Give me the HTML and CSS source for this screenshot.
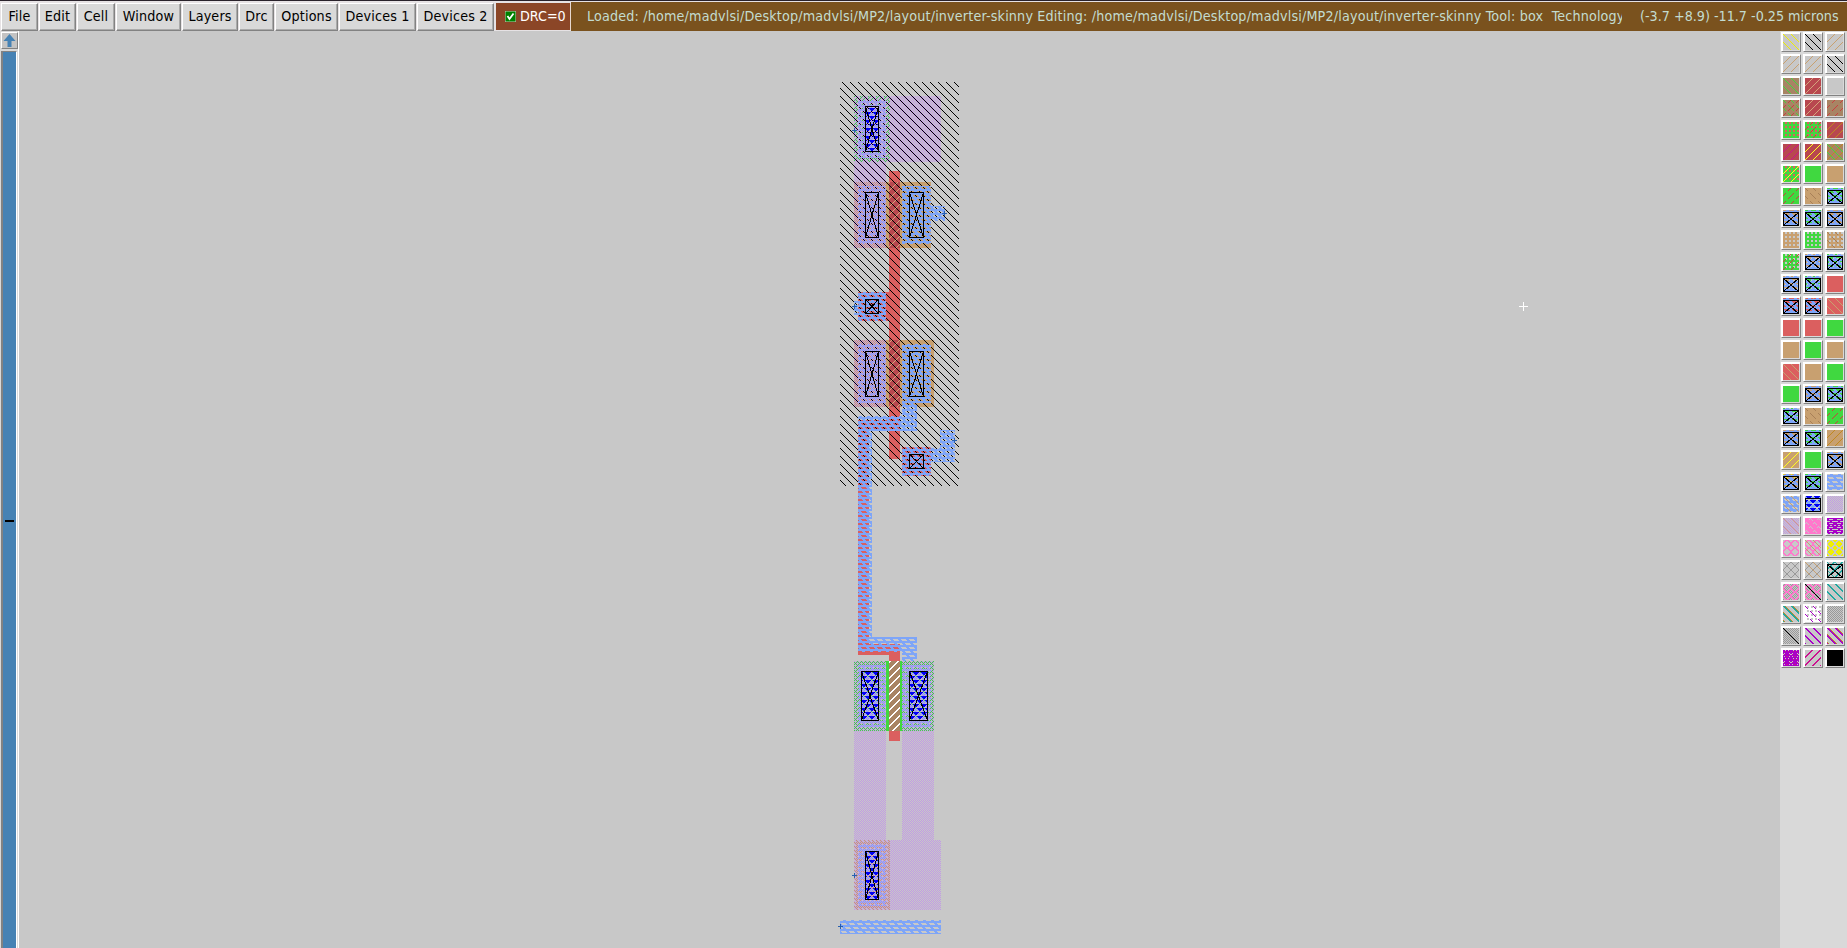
FILE: index.html
```html
<!DOCTYPE html>
<html lang="en">
<head>
<meta charset="utf-8">
<title>Magic layout</title>
<link rel="stylesheet" href="styles.css">
</head>
<body>
<header class="menubar">
  <nav class="menus">
    <button class="menu m-file">File</button>
    <button class="menu m-edit">Edit</button>
    <button class="menu m-cell">Cell</button>
    <button class="menu m-window">Window</button>
    <button class="menu m-layers">Layers</button>
    <button class="menu m-drc">Drc</button>
    <button class="menu m-options">Options</button>
    <button class="menu m-dev">Devices 1</button>
    <button class="menu m-dev">Devices 2</button>
  </nav>
  <div class="drc">
    <svg class="check" viewBox="0 0 11 11"><path class="check-bg" d="M0 0h11v11H0z"/><path class="check-tick" d="M2.5 5l2 3L8.500 2.500"/></svg>
    <span>DRC=0</span>
  </div>
  <div class="status">
    <div class="title">Loaded: /home/madvlsi/Desktop/madvlsi/MP2/layout/inverter-skinny Editing: /home/madvlsi/Desktop/madvlsi/MP2/layout/inverter-skinny Tool: box&nbsp; Technology</div>
    <div class="coords">(-3.7 +8.9) -11.7 -0.25 microns</div>
  </div>
</header>
<main class="work">
  <aside class="scroll">
    <div class="up"><svg viewBox="0 0 12 13"><path d="M6 0l6 7H8v6H4V7H0z"/></svg></div>
    <div class="track"><div class="tick"></div></div>
  </aside>
  <svg class="layout" id="layout" viewBox="19 31 1761 917" shape-rendering="crispEdges"></svg>
  <aside class="palette" id="palette"></aside>
</main>
<script src="app.js"></script>
</body>
</html>
```

FILE: styles.css
```css
* { box-sizing: border-box; }
body {
  margin: 0;
  width: 1847px;
  height: 948px;
  overflow: hidden;
  display: flex;
  flex-direction: column;
  background: #c8c8c8;
  font-family: "DejaVu Sans Condensed", "DejaVu Sans", sans-serif;
  font-stretch: condensed;
  font-size: 14px;
  color: #000;
}
.menubar {
  display: flex;
  height: 31px;
  flex: none;
  border-top: 1px solid #29222b;
  background: #e6e2e4;
  padding-top: 1px;
}
.menus { display: flex; gap: 1px; padding: 1px 0 0 1px; width: 496px; flex: none; }
.menu {
  height: 28px;
  padding: 0 0 2px;
  font: inherit;
  font-size: 14.2px;
  letter-spacing: 0.17px;
  color: #000;
  background: #d9d9d9;
  border: 1px solid;
  border-color: #fff #828282 #828282 #fff;
  box-shadow: inset -1px -1px #aaa;
  white-space: nowrap;
  flex: none;
}
.m-file { width: 37px; }
.m-edit { width: 37px; }
.m-cell { width: 38px; }
.m-window { width: 65px; }
.m-layers { width: 56px; }
.m-drc { width: 35px; }
.m-options { width: 63px; }
.m-dev { width: 77px; }
.drc {
  width: 75px;
  flex: none;
  margin-top: 1px;
  height: 27px;
  display: flex;
  align-items: center;
  gap: 4px;
  padding: 0 0 1px 9px;
  color: #fff;
  background: #8b4627;
  border-right: 1px solid #e6d8d0;
  font-size: 14.2px;
}
.check { width: 11px; height: 11px; flex: none; }
.check-bg { fill: #008000; stroke: #c8c8b8; stroke-width: 1; }
.check-tick { fill: none; stroke: #fff; stroke-width: 1.8; }
.status {
  flex: 1;
  display: flex;
  align-items: center;
  background: #7a521e;
  color: #c3dcd0;
  padding-left: 16px;
  white-space: pre;
  padding-bottom: 1px;
}
.title { width: 1035px; overflow: hidden; font-size: 14.2px; letter-spacing: 0.17px; line-height: 22px; flex: none; }
.coords { margin-left: 18px; font-size: 14.2px; flex: none; }
.work { display: flex; flex: 1; min-height: 0; }
.scroll { width: 19px; flex: none; background: #d9d9d9; padding: 1px 1px 0; display: flex; flex-direction: column; border-right: 1px solid #fff; }
.up { height: 17px; width: 17px; border: 1px solid; border-color: #fff #828282 #828282 #fff; background: #c3c3c3; padding: 1px; flex: none; }
.up svg { width: 13px; height: 13px; display: block; fill: #4682b4; }
.track { margin-top: 2px; flex: 1; width: 16px; background: #4682b4; border-left: 2px solid #828282; border-top: 1px solid #828282; border-right: 1px solid #fff; }
.tick { margin: 468px 0 0 2px; width: 9px; height: 2px; background: #000; }
.layout { width: 1761px; height: 917px; flex: none; display: block; background: #c8c8c8; }
.palette {
  flex: 1;
  background: #d9d9d9;
  display: grid;
  grid-template-columns: repeat(3, 20px);
  grid-auto-rows: 20px;
  gap: 2px;
  align-content: start;
  padding: 1px 0 0 1px;
}
.swatch {
  display: block;
  width: 20px;
  height: 20px;
  border: 1px solid;
  border-color: #fff #828282 #828282 #fff;
  box-shadow: inset 1px 1px #fff;
  padding: 1px;
  background: #d9d9d9;
}
.swatch svg { display: block; width: 16px; height: 16px; background: #c8c8c8; }
```

FILE: app.js
```js
// 8x8 stipple masks, one byte per row, most significant bit on the left.
const STIPPLES = {
  bs: '8040201008040201',
  bs3: '2010080402018040',
  fs: '0102040810204080',
  bs2: 'C06030180C060381',
  fs2: '03060C183060C081',
  bd: '8040200000040201',
  fd: '0102040000204080',
  chk: '55AA55AA55AA55AA',
  zig: '8A44A8118A44A811',
  zag: 'AA44AA11AA44AA11',
  metal: '1CFFFF83C1FFFF38',
  sq: '3333000033330000',
  via: '7E3C1800E7C38100',
  circ: '3C66C38181C3663C',
  thin: '8142241818244281',
  spot: 'FBF5FEFFBF5FEFFF',
  bar: 'FFC3FF18FFC3FF66',
  dots: '0024000042001800',
  pits: '2400004281004200'
};
const COLORS = {
  t: '#c8a070', g: '#40d840', r: '#db5f5f', d: '#b8484f', b: '#a88464', k: '#000',
  y: '#f0f000', Y: '#ffff20', w: '#fff', m: '#7ea5f8', l: '#c29be4', B: '#0000f4',
  o: '#c08820', n: '#d5a47c', x: '#c8c8c8', G: '#999', P: '#a800c8', K: '#ff78cc',
  T: '#20a8a0', M: '#cc1090', R: '#c84040', N: '#a88058'
};

function stipplePath(name, width, height) {
  const hex = STIPPLES[name];
  let d = '';
  for (let y = 0; y < height; y++) {
    const row = parseInt(hex.substr((y % 8) * 2, 2), 16);
    for (let x = 0; x < width; x++) {
      if (row & (128 >> (x % 8))) d += `M${x} ${y}h1v1h-1z`;
    }
  }
  return d;
}

// Layer palette: cells separated by spaces, layers inside a cell by commas.
const CELLS = `
bs:y bs:k fs:t
fs:t fs:t bs:k
b,bs:g d,fs:n x
b,bd:g,fd:R d,fs:n b,fd:R
g,sq:r g,sq:r,fd:R d,fs:o
d,fs:M d,fs:Y b,bs:g,fs:o
g,sq:r,fs:Y g t
g,fd:R t,bd:N g,c
t,c g,c t,c
t,sq:x g,sq:x t,sq:x,bd:N
g,sq:x,fd:R t,sq:x,c g,sq:x,c
t,sq:x,c g,sq:x,c r
r,c r,bd:t,c r,bs:t
r r g
t g t
r,bs:t t g
g t,c g,c
g,sq:x,c t,bd:N g,fd:R
t,c g,c t,fs:o
t,fs:Y g t,c
t,bs:y,c g,c metal:m
metal:m,bs:t metal:m,via:B,f chk:l
chk:l,bs:n spot:K bar:P
circ:K circ:K,bs:t y,circ:x
thin:G thin:G,bs:t fs2:T,thin:T,e
chk:G,circ:K chk:G,circ:K,z bs2:T
bs2:T,bs3:o w,sq:x,bd:P chk:G
chk:G,z bs2:P bs2:P,bs3:o
P,pits:x,dots:M fs2:M k`.trim().split(/\s+/);

const FRAME = '<path d="M.5 2.500h15v13H.5z" fill="none" stroke="#000"/>';
const CROSS = '<path d="M1 3l14 12M15 3L1 15" fill="none" stroke="#000"/>';

function layer(code) {
  if (code === 'c') return layer('metal:m') + FRAME + CROSS;
  if (code === 'e') return FRAME + CROSS;
  if (code === 'f') return FRAME;
  if (code === 'z') return '<path d="M0 0l16 16" stroke="#000"/>';
  if (code.length === 1) return `<rect width="16" height="16" fill="${COLORS[code]}"/>`;
  const [name, color] = code.split(':');
  return `<path d="${stipplePath(name, 16, 16)}" fill="${COLORS[color]}"/>`;
}
document.getElementById('palette').innerHTML = CELLS.map(cell =>
  `<div class="swatch"><svg viewBox="0 0 16 16" shape-rendering="crispEdges">${cell.split(',').map(layer).join('')}</svg></div>`
).join('');

// Painted geometry, bottom to top: [paint, x1, y1, x2, y2].
const SHAPES = [
  ['zig:g', 854, 96, 890, 162],
  ['t', 854, 182, 931, 248], ['t', 854, 340, 934, 407],
  ['r', 889, 171, 900, 459], ['r', 858, 292, 889, 321],
  ['d', 889, 182, 900, 248], ['fs:n', 889, 182, 900, 248],
  ['d', 889, 340, 900, 407], ['fs:n', 889, 340, 900, 407],
  ['r', 858, 420, 900, 431], ['r', 858, 420, 869, 655],
  ['r', 902, 447, 931, 476],
  ['r', 858, 644, 900, 655], ['r', 889, 655, 900, 661], ['r', 889, 731, 900, 741],
  ['zag:g', 854, 661, 886, 731], ['zag:g', 902, 661, 934, 731],
  ['g', 886, 661, 902, 731], ['b', 889, 661, 900, 731], ['fs2:w', 889, 661, 900, 731],
  ['t', 854, 840, 890, 910], ['sq:x', 854, 840, 890, 910],
  ['bs:k', 840, 82, 959, 486],
  ['metal:m', 858, 100, 886, 158], ['metal:m', 858, 186, 886, 244],
  ['metal:m', 902, 186, 931, 244], ['metal:m', 931, 206, 945, 221],
  ['metal:m', 858, 292, 886, 321], ['metal:m', 854, 301, 858, 315],
  ['metal:m', 858, 344, 886, 403], ['metal:m', 902, 344, 931, 403],
  ['metal:m', 902, 403, 917, 431], ['metal:m', 858, 416, 902, 431],
  ['metal:m', 858, 431, 872, 652], ['metal:m', 872, 637, 917, 652],
  ['metal:m', 902, 652, 917, 661],
  ['metal:m', 902, 447, 931, 476], ['metal:m', 931, 448, 955, 462],
  ['metal:m', 940, 430, 955, 448],
  ['metal:m', 858, 665, 886, 727], ['metal:m', 902, 665, 931, 727],
  ['metal:m', 858, 844, 886, 906], ['metal:m', 840, 920, 941, 934],
  ['chk:l', 854, 96, 941, 162], ['chk:l', 854, 162, 886, 182],
  ['chk:l', 854, 182, 886, 248], ['chk:l', 854, 340, 886, 407],
  ['chk:l', 854, 661, 886, 840], ['chk:l', 902, 661, 934, 840],
  ['chk:l', 854, 840, 941, 910],
  ['via:B', 865, 106, 879, 152], ['via:B', 861, 671, 879, 721],
  ['via:B', 909, 671, 928, 721], ['via:B', 865, 851, 879, 900]
];
const BOXES = [
  [865, 106, 879, 152], [865, 192, 879, 238], [909, 192, 924, 238],
  [865, 299, 879, 314], [865, 351, 879, 397], [909, 351, 924, 397],
  [909, 454, 924, 469], [861, 671, 879, 721], [909, 671, 928, 721], [865, 851, 879, 900]
];
const MARKS = [[854, 130], [944, 213], [854, 306], [954, 440], [854, 875], [840, 926]];

const used = [...new Set(SHAPES.map(s => s[0]).filter(p => p.includes(':')))];
const defs = used.map(p => {
  const [name, color] = p.split(':');
  return `<pattern id="${name}-${color}" width="8" height="8" patternUnits="userSpaceOnUse"><path d="${stipplePath(name, 8, 8)}" fill="${COLORS[color]}"/></pattern>`;
}).join('');
const rects = SHAPES.map(([p, x, y, x2, y2]) => {
  const fill = p.includes(':') ? `url(#${p.replace(':', '-')})` : COLORS[p];
  return `<rect x="${x}" y="${y}" width="${x2 - x}" height="${y2 - y}" fill="${fill}"/>`;
}).join('');
const boxes = BOXES.map(([x, y, a, b]) =>
  `<path d="M${x + .5} ${y + .5}H${a - .5}V${b - .5}H${x + .5}zL${a - .5} ${b - .5}M${a - .5} ${y + .5}L${x + .5} ${b - .5}" fill="none" stroke="#000"/>`
).join('');
const marks = MARKS.map(([x, y]) =>
  `<path d="M${x - 2} ${y + .5}h5M${x + .5} ${y - 2}v5" stroke="#2860b0"/>`
).join('');
document.getElementById('layout').innerHTML =
  `<defs>${defs}</defs>${rects}${boxes}${marks}<path d="M1519 306.500h9M1523.500 302v9" stroke="#fff"/>`;
```
